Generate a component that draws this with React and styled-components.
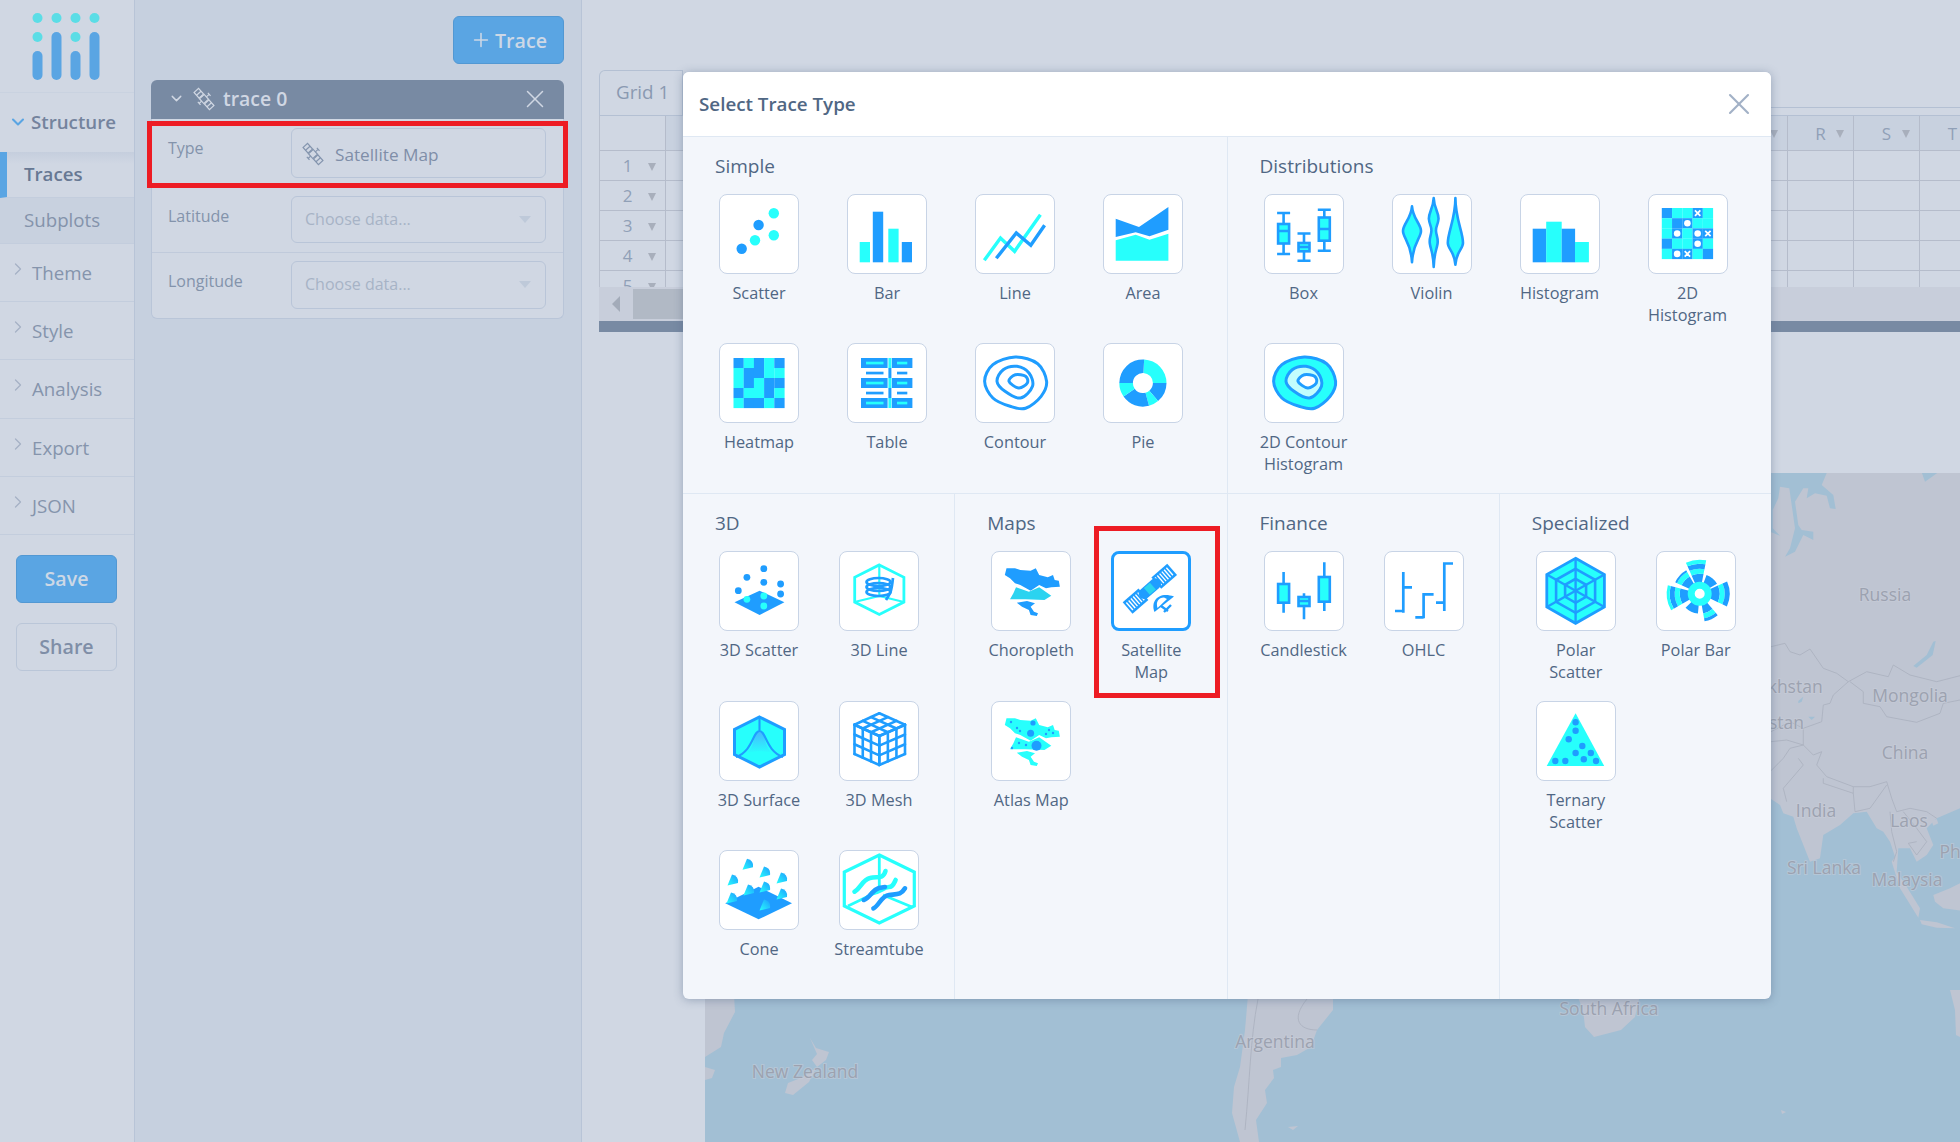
import React from 'react';
import styled, { createGlobalStyle } from 'styled-components';
import { X, ChevronDown, ChevronRight, Plus } from 'lucide-react';

const B = '#1f9dff';
const C = '#27fffc';
const FONT = `"Open Sans", "Noto Sans", sans-serif`;

const Global = createGlobalStyle`
  html, body { margin: 0; padding: 0; background: #d0d7e3; }
  body { font-family: ${FONT}; overflow: hidden; }
  * { box-sizing: border-box; }
`;

/* ---------- helpers for drawings ---------- */
const smooth = (pts) => {
  const n = pts.length;
  let d = `M${pts[0][0]},${pts[0][1]}`;
  for (let i = 0; i < n; i++) {
    const p0 = pts[(i - 1 + n) % n], p1 = pts[i], p2 = pts[(i + 1) % n], p3 = pts[(i + 2) % n];
    const c1 = [p1[0] + (p2[0] - p0[0]) / 6, p1[1] + (p2[1] - p0[1]) / 6];
    const c2 = [p2[0] - (p3[0] - p1[0]) / 6, p2[1] - (p3[1] - p1[1]) / 6];
    d += ` C${c1[0].toFixed(1)},${c1[1].toFixed(1)} ${c2[0].toFixed(1)},${c2[1].toFixed(1)} ${p2[0]},${p2[1]}`;
  }
  return d + 'Z';
};
const polar = (cx, cy, r, a) => {
  const t = ((a - 90) * Math.PI) / 180;
  return [cx + r * Math.cos(t), cy + r * Math.sin(t)];
};
const sector = (cx, cy, r0, r1, a0, a1) => {
  const [x0, y0] = polar(cx, cy, r1, a0), [x1, y1] = polar(cx, cy, r1, a1);
  const [x2, y2] = polar(cx, cy, r0, a1), [x3, y3] = polar(cx, cy, r0, a0);
  const large = a1 - a0 > 180 ? 1 : 0;
  return `M${x0},${y0} A${r1},${r1} 0 ${large} 1 ${x1},${y1} L${x2},${y2} A${r0},${r0} 0 ${large} 0 ${x3},${y3}Z`;
};
const P = (pts) => pts.map((p) => p.join(',')).join(' ');

const Ic = ({ children }) => (
  <svg width="80" height="80" viewBox="0 0 80 80">{children}</svg>
);

/* ---------- chart icons ---------- */
const OUTER = [[9.6,38.3],[17.9,21.7],[40.3,14],[62.7,20.7],[71.6,38.3],[66.1,53.3],[50.6,65.3],[35.1,63.3],[17.9,55]];
const MIDDLE = [[22,38.3],[28.2,26.7],[42,23.3],[54,30],[57.5,43.3],[45.5,55],[30,48.3]];
const INNER = [[34,38.3],[40.3,31.7],[50.6,33.3],[52.3,40],[43.7,45]];
const MAP_TOP = [[13.8,24],[15.5,17.3],[24,17.3],[29.3,19],[39.6,19.7],[44.8,17.3],[48.2,24],[56.8,26.3],[62,24],[63.7,29],[67.8,29.7],[68.9,35.7],[60.3,36.3],[55,37.3],[48.2,34],[39.6,39.7],[29.3,34],[24,32.3],[19,27.3]];
const MAP_MID = [[25,36.3],[37.9,40.7],[48.2,36.3],[60.3,44.7],[53.4,49],[34.4,48.3],[19,48.3],[22.4,42.3]];
const MAP_TAIL = [[25.8,51.7],[36,50],[44,52.3],[39.6,55.7],[43,60.7],[47,62.3],[45.8,65],[39.6,64],[37.9,59],[31,55.7]];
const HEAT = ['BCBCB', 'CBBCC', 'CBCBB', 'BCCBC', 'CBBCB'];
const H2D = [
  ['B','C','C','x','C'],
  ['C','B','o','C','C'],
  ['C','o','C','o','x'],
  ['B','C','C','o','C'],
  ['C','o','x','C','B'],
];
const hex = (cx, cy, rx, ry) => [
  [cx, cy - ry], [cx + rx, cy - ry / 2], [cx + rx, cy + ry / 2],
  [cx, cy + ry], [cx - rx, cy + ry / 2], [cx - rx, cy - ry / 2],
];

const Candle = ({ x, y0, y1, b0, b1, median }) => (
  <g stroke={B} strokeWidth="2.6">
    <line x1={x} x2={x} y1={y0} y2={y1} />
    <rect x={x - 5.5} y={b0} width="11" height={b1 - b0} fill={C} />
    {median && <line x1={x - 6} x2={x + 6} y1={median} y2={median} />}
  </g>
);
const BoxPlot = ({ x, y0, y1, b0, b1, median }) => (
  <g>
    <Candle x={x} y0={y0} y1={y1} b0={b0} b1={b1} median={median} />
    <line x1={x - 6.5} x2={x + 6.5} y1={y0} y2={y0} stroke={B} strokeWidth="2.6" />
    <line x1={x - 6.5} x2={x + 6.5} y1={y1} y2={y1} stroke={B} strokeWidth="2.6" />
  </g>
);
const Cone = ({ x, y }) => (
  <path d={`M${x - 5.5},${y + 5.5} L${x - 1},${y - 5.5} Q${x + 6},${y - 4} ${x + 5},${y + 3} Z`} fill="url(#coneGrad)" />
);

const ICONS = {
  Scatter: () => (
    <Ic>
      <circle cx="22.7" cy="54.7" r="5.2" fill={B} /><circle cx="36" cy="46.3" r="5.2" fill={C} />
      <circle cx="39.6" cy="31" r="5.2" fill={B} /><circle cx="54.8" cy="19.3" r="5.2" fill={C} />
      <circle cx="54.8" cy="41.3" r="5.2" fill={C} />
    </Ic>
  ),
  Bar: () => (
    <Ic>
      <rect x="12.7" y="48" width="10.3" height="20.3" fill={C} /><rect x="25.8" y="17.7" width="10.4" height="50.6" fill={B} />
      <rect x="41.3" y="34.7" width="10.3" height="33.6" fill={C} /><rect x="54.8" y="48" width="10.2" height="20.3" fill={B} />
    </Ic>
  ),
  Line: () => (
    <Ic>
      <polyline points="9.3,66.3 25.5,44 39.6,57.3 65.4,20.7" fill="none" stroke={C} strokeWidth="3.4" />
      <polyline points="21.3,64.3 41.3,39 55.8,51.3 69.6,31.3" fill="none" stroke={B} strokeWidth="3.4" />
    </Ic>
  ),
  Area: () => (
    <Ic>
      <polygon points="12.7,24.7 36,33 65.4,13 65.4,35.7 46.5,42.3 32.7,38.3 12.7,43" fill={B} />
      <polygon points="12.7,46.3 32.7,40.7 46.5,45.7 65.4,39.7 65.4,66.7 12.7,66.7" fill={C} />
    </Ic>
  ),
  Heatmap: () => (
    <Ic>
      {HEAT.map((r, j) => [...r].map((c, i) => (
        <rect key={`${i}-${j}`} x={14.5 + i * 10.2} y={15 + j * 10} width="10.3" height="10.1" fill={c === 'B' ? B : C} />
      )))}
    </Ic>
  ),
  Table: () => (
    <Ic>
      {[15, 35, 55].map((y) => (
        <g key={y}>
          <rect x="14" y={y} width="26.6" height="10" fill={B} /><rect x="44.8" y={y} width="20.6" height="10" fill={B} />
          <rect x="41.4" y={y} width="3" height="10" fill={C} />
          <rect x="19" y={y + 3.7} width="17.5" height="2.7" fill={C} /><rect x="50" y={y + 3.7} width="10.3" height="2.7" fill={C} />
        </g>
      ))}
      {[25, 45].map((y) => (
        <g key={y}>
          <rect x="41.4" y={y} width="3" height="10" fill={B} />
          <rect x="19" y={y + 3.7} width="17.5" height="2.7" fill={B} /><rect x="50" y={y + 3.7} width="10.3" height="2.7" fill={B} />
        </g>
      ))}
    </Ic>
  ),
  Contour: () => (
    <Ic>
      {[OUTER, MIDDLE, INNER].map((p, i) => <path key={i} d={smooth(p)} fill="none" stroke={B} strokeWidth="3" />)}
    </Ic>
  ),
  Pie: () => (
    <Ic>
      {[[3, 90, C], [90, 140, B], [140, 165, C], [165, 235, B], [235, 270, C], [270, 363, B]].map(([a, b, c]) => (
        <path key={a} d={sector(39.9, 40, 10, 23.6, a, b)} fill={c} />
      ))}
    </Ic>
  ),
  Box: () => (
    <Ic>
      <BoxPlot x={19.6} y0={19} y1={60} b0={30} b1={49.5} median={37} />
      <BoxPlot x={40} y0={39.5} y1={66.7} b0={49} b1={57.3} median={53} />
      <BoxPlot x={60.3} y0={15.7} y1={56.7} b0={23.5} b1={46.7} median={35} />
    </Ic>
  ),
  Violin: () => (
    <Ic>
      <g stroke={B} strokeWidth="2.6" fill={C} strokeLinejoin="round">
        <path d="M20,12.3 C21,25 29,30 29,37 C29,44 21,48 20,68.3 C19,48 11,44 11,37 C11,30 19,25 20,12.3Z" />
        <path d="M41.7,4 C42,14 47,19 46.5,25 C46,31 43.7,32 44,37 C44.3,42 46.5,44 45.5,50 C44.5,56 42,60 41.7,73 C41.4,60 38.9,56 37.9,50 C36.9,44 39.1,42 39.4,37 C39.7,32 37.4,31 36.9,25 C36.4,19 41.4,14 41.7,4Z" />
        <path d="M63.4,4 C63.4,25 71,38 71,49 C71,55 64,58 63.4,70.7 C62.8,58 55.8,55 55.8,49 C55.8,38 63.4,25 63.4,4Z" />
      </g>
    </Ic>
  ),
  Histogram: () => (
    <Ic>
      <rect x="12.7" y="34.7" width="13.6" height="33.6" fill={B} /><rect x="26.2" y="27.7" width="15.5" height="40.6" fill={C} />
      <rect x="41.7" y="34.7" width="13.4" height="33.6" fill={B} /><rect x="55" y="48" width="13.9" height="20.3" fill={C} />
    </Ic>
  ),
  '2D Histogram': () => (
    <Ic>
      {H2D.map((r, j) => r.map((c, i) => {
        const x = 13.8 + i * 10.25, y = 14 + j * 10.2;
        return (
          <g key={`${i}-${j}`}>
            <rect x={x} y={y} width="10.3" height="10.3" fill={c === 'C' ? C : B} />
            {c === 'o' && <circle cx={x + 5.1} cy={y + 5.1} r="3.3" fill="#fff" />}
            {c === 'x' && <path d={`M${x + 2.4},${y + 2.4} L${x + 7.8},${y + 7.8} M${x + 7.8},${y + 2.4} L${x + 2.4},${y + 7.8}`} stroke="#fff" strokeWidth="1.8" />}
          </g>
        );
      }))}
    </Ic>
  ),
  '2D Contour Histogram': () => (
    <Ic>
      <path d={smooth(OUTER)} fill={C} stroke={B} strokeWidth="3" />
      <path d={smooth(MIDDLE)} fill="#c2fdfd" stroke={B} strokeWidth="3" />
      <path d={smooth(INNER)} fill="#fff" stroke={B} strokeWidth="3" />
    </Ic>
  ),
  '3D Scatter': () => (
    <Ic>
      <polygon points="15.5,51.3 40.6,39.7 65.4,51.3 40.6,64" fill={B} />
      {[[44.8,17.7],[27.9,26.3],[44.8,31.3],[61.6,33],[19.3,39.7],[61.6,43]].map(([x, y]) => <circle key={x + '-' + y} cx={x} cy={y} r="3.4" fill={B} />)}
      {[[27.9,48.3],[44.8,45],[44.8,55]].map(([x, y]) => <circle key={x + '-' + y} cx={x} cy={y} r="3.4" fill={C} />)}
    </Ic>
  ),
  '3D Line': () => (
    <Ic>
      <polygon points={P(hex(40.3, 38.7, 24.6, 24.8))} fill="none" stroke={C} strokeWidth="2.8" />
      <path d="M40.3,14 V45 M40.3,45 L15.5,51 M40.3,45 L64.9,51" stroke={C} strokeWidth="2.2" fill="none" />
      <g fill="none" stroke={B} strokeWidth="2.7">
        <ellipse cx="39.5" cy="31" rx="12" ry="4" /><ellipse cx="39.5" cy="36" rx="12" ry="4" /><ellipse cx="39.5" cy="41" rx="12" ry="4" />
        <path d="M54,27 C53,34 53,40 50,44 L47,49" />
      </g>
    </Ic>
  ),
  '3D Surface': () => (
    <Ic>
      <defs>
        <linearGradient id="bell" x1="0" y1="0" x2="0" y2="1"><stop offset="0" stopColor="#49b4ff" /><stop offset="1" stopColor={C} /></linearGradient>
      </defs>
      <polygon points={P(hex(40.5, 41, 25, 25))} fill={C} stroke={B} strokeWidth="3" />
      <path d="M26,52 C36,50 34,30 40.5,30 C47,30 45,50 55,52 L40.5,50Z" fill="url(#bell)" />
      <path d="M40.5,16 V30 M17,56 C34,50 34,30 40.5,30 C47,30 47,50 64,56" fill="none" stroke={B} strokeWidth="2.1" />
    </Ic>
  ),
  '3D Mesh': () => {
    const T = [40.3, 12.3], R = [66, 23.7], M = [40.3, 35], L = [15.5, 23.7], Bm = [40.3, 64], RB = [66, 53], LB = [15.5, 53];
    const mix = (a, b, t) => [a[0] + (b[0] - a[0]) * t, a[1] + (b[1] - a[1]) * t];
    const lines = [];
    [0, 1 / 3, 2 / 3, 1].forEach((t) => {
      lines.push([mix(L, T, t), mix(M, R, t)], [mix(T, R, t), mix(L, M, t)]);
      lines.push([mix(L, LB, t), mix(M, Bm, t)], [mix(L, M, t), mix(LB, Bm, t)]);
      lines.push([mix(M, Bm, t), mix(R, RB, t)], [mix(M, R, t), mix(Bm, RB, t)]);
    });
    return (
      <Ic>
        <g stroke={B} strokeWidth="2.6" strokeLinecap="round">
          {lines.map((l, i) => <line key={i} x1={l[0][0]} y1={l[0][1]} x2={l[1][0]} y2={l[1][1]} />)}
        </g>
      </Ic>
    );
  },
  Cone: () => (
    <Ic>
      <defs>
        <linearGradient id="coneGrad" x1="0" y1="1" x2="1" y2="0"><stop offset="0" stopColor={C} /><stop offset="1" stopColor={B} /></linearGradient>
      </defs>
      <polygon points="6.2,53.3 39.6,36.7 73,53.3 39.6,69.3" fill={B} />
      {[[29,14.3],[46,22],[63,28],[14,30],[13,48],[30,40],[46,37],[63,44],[46,55]].map(([x, y]) => <Cone key={x + '-' + y} x={x} y={y} />)}
    </Ic>
  ),
  Streamtube: () => (
    <Ic>
      <polygon points={P(hex(40.3, 39, 35, 34))} fill="none" stroke={C} strokeWidth="3.2" />
      <path d="M40.3,5 V38 M9,56 L36,43 M44,45 L73,57" fill="none" stroke={C} strokeWidth="2.8" />
      <g fill="none" strokeLinecap="round" strokeWidth="4.6">
        <path d="M15.5,41.7 C22,38 23,30 31,28 C38,26 44,30 46.5,21" stroke={C} />
        <path d="M33,43 C42,42 44,37 50,37 C54,37 55,33 56.6,30" stroke={C} />
        <path d="M24.8,50 C31,48 33,40 40,38 L46,37" stroke={B} />
        <path d="M34.4,58.3 C40,56 42,46 50,45 C58,44 62,45 66,38.3" stroke={B} />
      </g>
    </Ic>
  ),
  Choropleth: () => (
    <Ic>
      <polygon points={P(MAP_TOP)} fill={B} /><polygon points={P(MAP_MID)} fill="#2bd3f0" /><polygon points={P(MAP_TAIL)} fill={B} />
    </Ic>
  ),
  'Satellite Map': () => (
    <Ic>
      <g transform="rotate(-41 38.5 38)">
        {[9.5, 47.5].map((x) => (
          <g key={x}>
            <rect x={x} y="30.5" width="21" height="15" fill={B} />
            {[0, 1, 2, 3, 4, 5].map((i) => <rect key={i} x={x + 2 + i * 3} y="33" width="1.4" height="10" fill="#fff" />)}
          </g>
        ))}
        <rect x="26" y="32.5" width="26" height="11" rx="5.5" fill={B} />
        <rect x="35" y="33.5" width="8" height="9" fill="#2bd3f0" />
      </g>
      <path d="M43.5,61 C39,50 48,40 63,45.5 L43.5,61Z" fill={B} />
      <path d="M46.5,57 C44.5,51 47.5,46.5 53,46.5 L56,48 Z" fill="#fff" />
      <path d="M50,55 L57,60 M53,61 L60,54" stroke={B} strokeWidth="2.4" fill="none" />
    </Ic>
  ),
  'Atlas Map': () => (
    <Ic>
      <polygon points={P(MAP_TOP)} fill={C} /><polygon points={P(MAP_MID)} fill={C} /><polygon points={P(MAP_TAIL)} fill={C} />
      <circle cx="45.5" cy="44.7" r="5" fill={B} /><circle cx="39.6" cy="32.3" r="3.5" fill={B} /><circle cx="42" cy="22" r="2.6" fill={B} />
      {[[20,21],[26,27],[28,42],[35,44],[55,33],[58,29],[62,32],[29,30],[21,47]].map(([x, y]) => <circle key={x + '-' + y} cx={x} cy={y} r="1.2" fill={B} />)}
    </Ic>
  ),
  Candlestick: () => (
    <Ic>
      <Candle x={19.6} y0={21} y1={61.7} b0={33} b1={51.7} />
      <Candle x={40} y0={42.3} y1={68.3} b0={46} b1={55} median={50} />
      <Candle x={60.3} y0={11.3} y1={60} b0={26} b1={50.7} />
    </Ic>
  ),
  OHLC: () => (
    <Ic>
      <path d="M19.3,21 V61.7 M19.3,36.3 H28 M19.3,60 H11 M39.6,67.3 V43.3 M38.3,43.3 H49.6 M39.6,66.3 H31.3 M60.3,60 V11.3 M59,12.5 H69 M60.3,51.7 H52" fill="none" stroke={B} strokeWidth="2.7" />
    </Ic>
  ),
  'Polar Scatter': () => {
    const cx = 39.6, cy = 39.8;
    return (
      <Ic>
        <polygon points={P(hex(cx, cy, 28.8, 32.5))} fill={C} stroke={B} strokeWidth="2.8" />
        <polygon points={P(hex(cx, cy, 19.5, 22))} fill="none" stroke={B} strokeWidth="2.6" />
        <polygon points={P(hex(cx, cy, 10.5, 12))} fill="none" stroke={B} strokeWidth="2.6" />
        {hex(cx, cy, 28.8, 32.5).map((p, i) => <line key={i} x1={cx} y1={cy} x2={p[0]} y2={p[1]} stroke={B} strokeWidth="2.4" />)}
      </Ic>
    );
  },
  'Polar Bar': () => {
    const W = [[-24, 11, 34], [20, 60, 20], [66, 115, 30], [140, 170, 28], [185, 225, 20], [240, 285, 33], [295, 330, 27]];
    const bands = [[11, 20, B], [20, 25, C], [25, 30, B], [30, 36, C]];
    const cx = 43.7, cy = 42.7;
    return (
      <Ic>
        {W.map(([a, b, r]) => bands.filter((s) => s[0] < r).map((s) => (
          <path key={`${a}-${s[0]}`} d={sector(cx, cy, s[0], Math.min(s[1], r), a, b)} fill={s[2]} />
        )))}
        <circle cx={cx} cy={cy} r="8.5" fill="none" stroke={C} strokeWidth="7" />
      </Ic>
    );
  },
  'Ternary Scatter': () => (
    <Ic>
      <polygon points="39.6,12.3 68.2,65 10.7,65" fill={C} />
      {[[39.6,21.3],[39.6,29.7],[32.7,38.3],[46.3,45],[39.6,52],[54.8,52],[47.8,58.3],[60,60],[19.3,60],[29.3,60]].map(([x, y]) => <circle key={x + '-' + y} cx={x} cy={y} r="3.2" fill={B} />)}
    </Ic>
  ),
};

const SatelliteOutline = ({ size, color }) => (
  <svg width={size} height={size} viewBox="0 0 24 24" fill="none" stroke={color} strokeWidth="1.2">
    <g transform="rotate(48 12 12)">
      <rect x="0.5" y="9" width="7.5" height="6" /><line x1="4.2" y1="9" x2="4.2" y2="15" />
      <rect x="16" y="9" width="7.5" height="6" /><line x1="19.8" y1="9" x2="19.8" y2="15" />
      <rect x="8.8" y="8.8" width="6.4" height="6.4" />
      <path d="M8,12 H9 M15,12 H16 M12,8.8 V5.5 M10,5 H14 M12,15.2 V18 M10,18.5 H14" />
    </g>
  </svg>
);

const Logo = () => (
  <svg width="70" height="72" viewBox="0 0 70 72">
    {[7.5, 26.5, 45.5, 64.5].map((x) => <circle key={x} cx={x} cy="5" r="5" fill="#5bdde6" />)}
    <circle cx="7.5" cy="24" r="5" fill="#5bdde6" />
    <circle cx="45.5" cy="24" r="5" fill="#5bdde6" />
    <rect x="2.5" y="38" width="10" height="29" rx="5" fill="#5aa5e3" />
    <rect x="21.5" y="19" width="10" height="48" rx="5" fill="#5aa5e3" />
    <rect x="40.5" y="38" width="10" height="29" rx="5" fill="#5aa5e3" />
    <rect x="59.5" y="19" width="10" height="48" rx="5" fill="#5aa5e3" />
  </svg>
);

/* ---------- map drawing (coordinates of the page) ---------- */
const z = (pts) => pts.map(([x, y]) => [+(1770 + x / 3).toFixed(1), +(465 + y / 3).toFixed(1)]);
const ASIA = z([[0,24],[600,24],[600,1030],[570,1030],[500,1060],[470,1090],[490,1140],[470,1170],[440,1190],[420,1150],[385,1150],[380,1220],[410,1265],[450,1330],[445,1358],[390,1270],[365,1190],[375,1175],[360,1130],[340,1100],[320,1090],[290,1040],[250,1045],[210,1080],[160,1110],[150,1180],[120,1190],[80,1090],[70,1055],[40,1045],[30,1020],[0,1000]]);
const ARCTIC = z([[0,24],[170,24],[155,60],[190,90],[197,132],[180,130],[170,92],[135,85],[110,100],[115,70],[100,70],[75,110],[85,180],[95,195],[130,200],[130,225],[100,210],[75,260],[45,275],[60,250],[75,190],[65,120],[58,70],[30,65],[25,100],[8,135],[8,190],[30,212],[0,200]]);
const ISLANDS = [
  z([[450,1365],[500,1372],[555,1390],[500,1388],[455,1378]]),
  z([[490,1290],[540,1270],[600,1240],[600,1340],[520,1330],[495,1310]]),
  z([[485,1068],[500,1062],[505,1075],[490,1082]]),
];
const LAKES = [
  z([[490,530],[497,528],[488,570],[440,608],[430,603],[470,570]]),
  z([[85,708],[100,695],[95,710],[85,715]]),
  z([[115,755],[135,755],[125,765]]),
  z([[455,22],[505,22],[465,50]]),
];
const BORDERS = [
  [[3,545],[45,535],[60,560],[90,570],[120,552],[160,610],[200,625],[235,650]],
  [[235,650],[290,620],[355,635],[370,600],[420,630],[500,650],[570,632]],
  [[240,650],[280,680],[280,715],[330,725],[350,755],[440,772],[510,745],[520,715],[570,705]],
  [[235,650],[190,690],[180,715],[160,720],[155,770],[100,790]],
  [[100,790],[100,840],[130,870],[155,860],[140,900],[170,935],[250,965],[300,965],[350,950],[365,1000],[380,1040],[420,1030],[470,1040],[500,1060]],
  [[160,940],[160,955],[250,985],[250,965]],
  [[100,840],[60,850],[40,880],[0,920]],
  [[85,880],[100,900],[40,970],[50,1010]],
  [[250,985],[255,1040],[300,1030],[350,960]],
  [[360,1040],[365,1100],[380,1160],[370,1190]],
  [[400,1040],[440,1090],[470,1130],[440,1170],[415,1135],[440,1130]],
  [[3,800],[60,770],[100,790]],
  [[3,830],[50,825],[100,840]],
];
const SOUTH = [
  [[1248,995],[1333,995],[1333,1010],[1317,1030],[1311,1047],[1297,1055],[1281,1058],[1281,1067],[1273,1070],[1274,1078],[1265,1090],[1267,1103],[1256,1120],[1259,1142],[1240,1142],[1232,1113],[1234,1087],[1240,1067],[1245,1030]],
  [[1288,1127],[1298,1126],[1293,1130]],
  [[1577,995],[1640,995],[1635,1017],[1621,1030],[1594,1037],[1585,1027],[1583,1010]],
  [[1950,990],[1960,990],[1960,1037],[1956,1035],[1955,1010]],
  [[1781,1110],[1786,1112],[1782,1114]],
  [[705,995],[734,995],[735,1012],[724,1033],[721,1047],[705,1057]],
  [[705,1067],[715,1070],[712,1078],[705,1080]],
  [[810,1038],[816,1048],[829,1052],[826,1060],[817,1067],[812,1060],[817,1054]],
  [[816,1068],[809,1082],[793,1095],[785,1093],[788,1083],[803,1077]],
];
const LABELS = [
  ['Russia', 1885, 601], ['Mongolia', 1910, 702], ['China', 1905, 759], ['India', 1816, 817],
  ['Laos', 1909, 827], ['Sri Lanka', 1824, 874], ['Malaysia', 1907, 886], ['Philippines', 1984, 858],
  ['Kazakhstan', 1776, 693], ['Uzbekistan', 1759, 729], ['South Africa', 1609, 1015],
  ['Argentina', 1275, 1048], ['New Zealand', 805, 1078],
];

const WorldMap = () => (
  <svg width="1255" height="669" viewBox="705 473 1255 669">
    <polygon points={P(ASIA)} fill="#bfc5d2" />
    <polygon points={P(ARCTIC)} fill="#a2bfd4" />
    {ISLANDS.map((p, i) => <polygon key={i} points={P(p)} fill="#bfc5d2" />)}
    {LAKES.map((p, i) => <polygon key={i} points={P(p)} fill="#a2bfd4" />)}
    {BORDERS.map((p, i) => <polyline key={i} points={P(z(p))} fill="none" stroke="#a9b0be" strokeWidth="0.8" />)}
    {SOUTH.map((p, i) => <polygon key={i} points={P(p)} fill="#bfc5d2" />)}
    <path d="M1258,999 C1250,1040 1250,1080 1245,1130 M1307,999 C1290,1020 1300,1030 1317,1030" fill="none" stroke="#a9b0be" strokeWidth="0.8" />
    {LABELS.map(([t, x, y]) => (
      <text key={t} x={x} y={y} textAnchor="middle" fontFamily={FONT} fontSize="17.5" fill="#9ca2b0" stroke="#c9ced9" strokeOpacity="0.5" strokeWidth="2" style={{ paintOrder: 'stroke' }}>{t}</text>
    ))}
  </svg>
);

/* ---------- page structure ---------- */
const Page = styled.div`
  position: relative; display: flex; width: 1960px; height: 1142px; overflow: hidden;
  background: #d0d7e3; color: #506784; font-family: ${FONT};
`;
const Sidebar = styled.aside`
  flex: 0 0 135px; border-right: 1px solid #b8c4d7; display: flex; flex-direction: column; background: #d0d7e3;
`;
const LogoBox = styled.div`
  height: 93px; padding: 13px 0 0 30px; border-bottom: 1px solid #c9d2e0;
`;
const GroupHead = styled.div`
  display: flex; align-items: center; padding-left: 8px; gap: 3px;
  padding-bottom: ${(p) => (p.$open ? '2px' : '0')};
  font-size: 18.7px; font-weight: ${(p) => (p.$open ? 600 : 400)};
  color: ${(p) => (p.$open ? '#74839d' : '#8594ac')};
  border-bottom: ${(p) => (p.$open ? 'none' : '1px solid #c3cddd')};
  height: ${(p) => (p.$open ? '59px' : '58.2px')};
`;
const GroupChevron = styled.span`
  display: flex; margin-top: -7px; margin-right: 1px;
`;
const SubItem = styled.div`
  height: 46px; display: flex; align-items: center; padding-bottom: 2px;
  padding-left: ${(p) => (p.$active ? '17px' : '24px')};
  font-size: 18.7px; font-weight: ${(p) => (p.$active ? 600 : 400)};
  color: ${(p) => (p.$active ? '#677893' : '#8493ab')};
  background: ${(p) => (p.$active ? 'linear-gradient(#c5cedd, #d0d7e3 12px)' : '#c8d1df')};
  border-left: ${(p) => (p.$active ? '7px solid #5aa5e3' : 'none')};
  border-bottom: 1px solid #c3cddd;
`;
const SideButtons = styled.div`
  display: flex; flex-direction: column; gap: 20px; padding: 20px 17px 0 16px;
`;
const SideButton = styled.div`
  height: 48px; border-radius: 6px; display: flex; align-items: center; justify-content: center;
  font-size: 19.6px; font-weight: 600;
  background: ${(p) => (p.$primary ? '#5aa5e3' : 'transparent')};
  color: ${(p) => (p.$primary ? '#cdd8e6' : '#7f8ea7')};
  border: 1px solid ${(p) => (p.$primary ? '#5298d3' : '#bac6d8')};
`;
const TraceColumn = styled.section`
  flex: 0 0 447px; background: #c6d0df; border-right: 1px solid #b8c4d7;
  padding: 16px 17px 0 16px; display: flex; flex-direction: column;
`;
const AddTrace = styled.div`
  align-self: flex-end; width: 111px; height: 48px; border-radius: 6px; background: #5aa5e3;
  border: 1px solid #5298d3; color: #cdd8e6; font-size: 19.6px; font-weight: 600;
  display: flex; align-items: center; justify-content: center; gap: 3px;
`;
const TraceHead = styled.div`
  margin-top: 16px; height: 39px; background: #788aa3; border-radius: 6px 6px 0 0; color: #d0d7e3;
  display: flex; align-items: center; padding: 0 14px 2px 17px; gap: 7px;
  font-size: 19.4px; font-weight: 600;
`;
const TraceName = styled.span` flex: 1; `;
const TraceBody = styled.div`
  background: #d0d7e3; border: 1px solid #b9c5d8; border-top: none; border-radius: 0 0 6px 6px;
`;
const TraceRow = styled.div`
  position: relative; display: flex; padding: ${(p) => (p.$line ? '8px' : '9px')} 17px 9px 16px; height: ${(p) => p.$h}px;
  border-top: ${(p) => (p.$line ? '1px solid #c0cadb' : 'none')};
`;
const RowLabel = styled.div`
  flex: 0 0 123px; margin-top: 8px; line-height: 24px; font-size: 16px; color: #8393ab;
`;
const Field = styled.div`
  flex: 1; border: 1px solid #b9c5d8; border-radius: 6px; position: relative;
  display: flex; align-items: center; font-size: ${(p) => (p.$value ? '17.2px' : '16px')};
  padding: ${(p) => (p.$value ? '2px 0 0 9px' : '0 0 2px 13px')}; gap: 10px;
  color: ${(p) => (p.$value ? '#7f8ea8' : '#a7b3c6')};
`;
const Caret = styled.i`
  position: absolute; right: 14px; top: 19px; width: 0; height: 0;
  border-left: 6px solid transparent; border-right: 6px solid transparent; border-top: 7px solid #bec9d9;
`;
const RedFrame = styled.div`
  position: absolute; border: 5px solid #ed1c24; pointer-events: none;
  left: ${(p) => p.$l}px; top: ${(p) => p.$t}px; width: ${(p) => p.$w}px; height: ${(p) => p.$h}px;
`;

const Main = styled.main`
  flex: 1; min-width: 0; padding: 70px 0 0 17px; display: flex; flex-direction: column; overflow: hidden;
`;
const TabBar = styled.div`
  height: 38px; border-bottom: 1px solid #b4c0d3; display: flex;
`;
const Tab = styled.div`
  width: 84px; height: 45px; flex: none; border: 1px solid #b4c0d3; border-bottom: none; border-radius: 6px 0 0 0;
  padding: 9px 0 0 16px; font-size: 18.8px; line-height: 25px; color: #8a99b1; background: #d0d7e3;
`;
const Sheet = styled.div`
  margin-top: 7px; height: 172px; overflow: hidden; border-top: 1px solid #b4c0d3;
  border-left: 1px solid #b9c0ce;
`;
const SheetRow = styled.div`
  display: flex; height: ${(p) => p.$h}px;
`;
const Cell = styled.div`
  flex: 0 0 66px; position: relative; border-right: 1px solid #b5bccb; border-bottom: 1px solid #b5bccb;
  display: flex; align-items: center; justify-content: center;
  padding-right: ${(p) => (p.$num ? '10px' : '0')}; font-size: 17px; color: #90a0b7;
  background: ${(p) => (p.$head ? '#c8d1df' : 'transparent')};
`;
const MiniCaret = styled.i`
  position: absolute; right: 9px; top: 50%; margin-top: -3px; width: 0; height: 0;
  border-left: 4px solid transparent; border-right: 4px solid transparent; border-top: 8px solid #a8afbc;
`;
const ScrollTrack = styled.div`
  height: 34px; background: #c8cedb; display: flex; align-items: center; padding-left: 13px;
`;
const ScrollArrow = styled.i`
  width: 0; height: 0; border-top: 8px solid transparent; border-bottom: 8px solid transparent; border-right: 8px solid #a3abb9;
`;
const ScrollThumb = styled.div`
  margin-left: 13px; width: 400px; height: 30px; background: #b1b9c5;
`;
const DarkBar = styled.div` height: 11px; background: #788aa3; `;
const MapArea = styled.div`
  margin: 141px 0 0 106px; height: 669px; width: 1255px; background: #a2bfd4; flex: none;
  svg { display: block; }
`;

const Modal = styled.div`
  position: absolute; left: 683px; top: 72px; width: 1088px; height: 927px;
  background: #f3f6fb; border-radius: 6px; box-shadow: 0 1px 10px rgba(80, 103, 132, 0.45);
  display: flex; flex-direction: column; overflow: visible;
`;
const ModalHead = styled.header`
  height: 65px; flex: none; background: #fff; border-radius: 6px 6px 0 0; border-bottom: 1px solid #dfe8f3;
  display: flex; align-items: center; justify-content: space-between; padding: 0 14px 0 16px;
  font-size: 18.8px; font-weight: 600; color: #506784;
`;
const Row = styled.div`
  display: flex; flex: ${(p) => (p.$grow ? '1' : '0 0 357px')}; min-height: 0;
  border-bottom: ${(p) => (p.$grow ? 'none' : '1px solid #dfe8f3')};
`;
const Section = styled.section`
  flex: 1 1 0; padding-top: 17px; border-right: 1px solid #dfe8f3;
  &:last-child { border-right: none; }
`;
const SectionTitle = styled.h2`
  margin: 0 0 16px 32px; font-size: 19px; line-height: 24px; font-weight: 500; color: #506784;
`;
const Items = styled.div`
  display: grid; grid-auto-rows: ${(p) => (p.$cols === 4 ? '149px' : '149.5px')};
  padding-left: ${(p) => (p.$cols === 4 ? 12 : 16)}px;
  grid-template-columns: repeat(${(p) => p.$cols}, ${(p) => (p.$cols === 4 ? 128 : 120)}px);
`;
const Item = styled.div`
  position: relative; display: flex; flex-direction: column; align-items: center;
`;
const IconBox = styled.div`
  width: 80px; height: 80px; flex: none; background: #fff; border-radius: 8px; overflow: hidden;
  border: ${(p) => (p.$selected ? `3px solid ${B}` : '1px solid #c8d4e6')};
  display: flex; align-items: center; justify-content: center;
  svg { flex: none; }
`;
const ItemLabel = styled.div`
  margin-top: 8px; max-width: 92px; text-align: center; font-size: 16.3px; line-height: 22px; font-weight: 500; color: #506784;
`;

const GROUPS_TOP = [
  { title: 'Simple', items: ['Scatter', 'Bar', 'Line', 'Area', 'Heatmap', 'Table', 'Contour', 'Pie'] },
  { title: 'Distributions', items: ['Box', 'Violin', 'Histogram', '2D Histogram', '2D Contour Histogram'] },
];
const GROUPS_BOTTOM = [
  { title: '3D', items: ['3D Scatter', '3D Line', '3D Surface', '3D Mesh', 'Cone', 'Streamtube'] },
  { title: 'Maps', items: ['Choropleth', 'Satellite Map', 'Atlas Map'] },
  { title: 'Finance', items: ['Candlestick', 'OHLC'] },
  { title: 'Specialized', items: ['Polar Scatter', 'Polar Bar', 'Ternary Scatter'] },
];

const Group = ({ title, items, cols }) => (
  <Section>
    <SectionTitle>{title}</SectionTitle>
    <Items $cols={cols}>
      {items.map((name) => {
        const Icon = ICONS[name];
        const selected = name === 'Satellite Map';
        return (
          <Item key={name}>
            <IconBox $selected={selected}><Icon /></IconBox>
            <ItemLabel>{name}</ItemLabel>
            {selected && <RedFrame $l={3} $t={-25} $w={126} $h={172} />}
          </Item>
        );
      })}
    </Items>
  </Section>
);

const LETTERS = 'ABCDEFGHIJKLMNOPQRST'.split('');

export default function App() {
  return (
    <Page>
      <Global />
      <Sidebar>
        <LogoBox><Logo /></LogoBox>
        <GroupHead $open><ChevronDown size={20} color="#5aa5e3" strokeWidth={2.5} />Structure</GroupHead>
        <SubItem $active>Traces</SubItem>
        <SubItem>Subplots</SubItem>
        {['Theme', 'Style', 'Analysis', 'Export', 'JSON'].map((t) => (
          <GroupHead key={t}>
            <GroupChevron><ChevronRight size={20} color="#a5b1c5" strokeWidth={1.5} /></GroupChevron>
            {t}
          </GroupHead>
        ))}
        <SideButtons>
          <SideButton $primary>Save</SideButton>
          <SideButton>Share</SideButton>
        </SideButtons>
      </Sidebar>

      <TraceColumn>
        <AddTrace><Plus size={22} strokeWidth={1.7} />Trace</AddTrace>
        <TraceHead>
          <ChevronDown size={17} strokeWidth={2} />
          <SatelliteOutline size={24} color="#d0d7e3" />
          <TraceName>trace 0</TraceName>
          <X size={30} strokeWidth={1.2} />
        </TraceHead>
        <TraceBody>
          <TraceRow $h={68}>
            <RowLabel>Type</RowLabel>
            <Field $value><SatelliteOutline size={24} color="#8495ae" />Satellite Map</Field>
            <RedFrame $l={-5} $t={2} $w={421} $h={67} />
          </TraceRow>
          <TraceRow $h={65}>
            <RowLabel>Latitude</RowLabel>
            <Field>Choose data...<Caret /></Field>
          </TraceRow>
          <TraceRow $h={66} $line>
            <RowLabel>Longitude</RowLabel>
            <Field>Choose data...<Caret /></Field>
          </TraceRow>
        </TraceBody>
      </TraceColumn>

      <Main>
        <TabBar><Tab>Grid 1</Tab></TabBar>
        <Sheet>
          <SheetRow $h={35}>
            <Cell />
            {LETTERS.map((l) => <Cell key={l} $head>{l}<MiniCaret /></Cell>)}
          </SheetRow>
          {[1, 2, 3, 4, 5, 6].map((n) => (
            <SheetRow key={n} $h={30}>
              <Cell $num>{n}<MiniCaret /></Cell>
              {LETTERS.map((l) => <Cell key={l} />)}
            </SheetRow>
          ))}
        </Sheet>
        <ScrollTrack><ScrollArrow /><ScrollThumb /></ScrollTrack>
        <DarkBar />
        <MapArea><WorldMap /></MapArea>
      </Main>

      <Modal>
        <ModalHead>Select Trace Type<X size={36} color="#a2b1c6" strokeWidth={1.4} /></ModalHead>
        <Row>
          {GROUPS_TOP.map((g) => <Group key={g.title} {...g} cols={4} />)}
        </Row>
        <Row $grow>
          {GROUPS_BOTTOM.map((g) => <Group key={g.title} {...g} cols={2} />)}
        </Row>
      </Modal>
    </Page>
  );
}
